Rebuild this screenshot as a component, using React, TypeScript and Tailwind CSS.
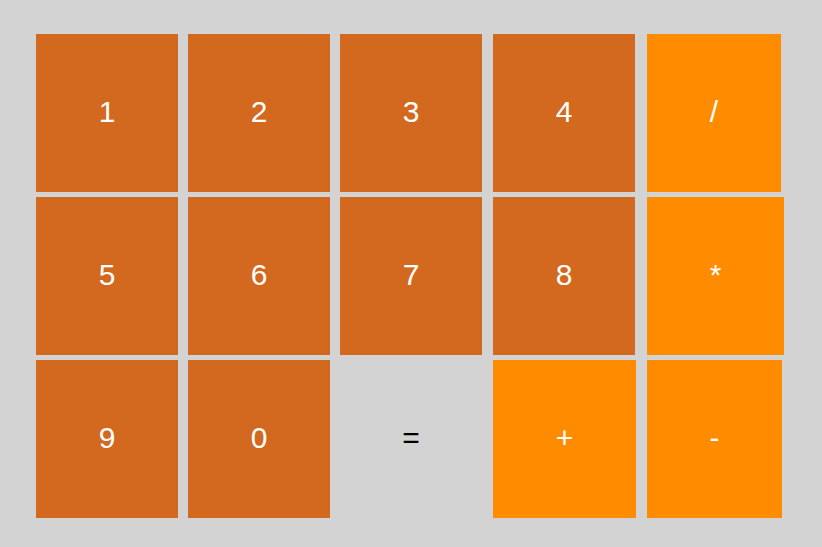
const rows: { label: string; kind: "num" | "op" | "eq"; w: string; ml: string }[][] = [
  [
    { label: "1", kind: "num", w: "w-[142px]", ml: "ml-0" },
    { label: "2", kind: "num", w: "w-[142px]", ml: "ml-[10px]" },
    { label: "3", kind: "num", w: "w-[142px]", ml: "ml-[10px]" },
    { label: "4", kind: "num", w: "w-[142px]", ml: "ml-[11px]" },
    { label: "/", kind: "op", w: "w-[134px]", ml: "ml-[12px]" },
  ],
  [
    { label: "5", kind: "num", w: "w-[142px]", ml: "ml-0" },
    { label: "6", kind: "num", w: "w-[142px]", ml: "ml-[10px]" },
    { label: "7", kind: "num", w: "w-[142px]", ml: "ml-[10px]" },
    { label: "8", kind: "num", w: "w-[142px]", ml: "ml-[11px]" },
    { label: "*", kind: "op", w: "w-[137px]", ml: "ml-[12px]" },
  ],
  [
    { label: "9", kind: "num", w: "w-[142px]", ml: "ml-0" },
    { label: "0", kind: "num", w: "w-[142px]", ml: "ml-[10px]" },
    { label: "=", kind: "eq", w: "w-[142px]", ml: "ml-[10px]" },
    { label: "+", kind: "op", w: "w-[143px]", ml: "ml-[11px]" },
    { label: "-", kind: "op", w: "w-[135px]", ml: "ml-[11px]" },
  ],
];

function Key({ label, kind, w, ml }: { label: string; kind: "num" | "op" | "eq"; w: string; ml: string }) {
  const color =
    kind === "num" ? "bg-[#d2691e] text-white" : kind === "op" ? "bg-[#ff8c00] text-white" : "bg-transparent text-black";
  return (
    <div className={`${w} ${ml} h-[158px] flex items-center justify-center pb-[4px] text-[30px] ${color}`}>
      {label}
    </div>
  );
}

export default function App() {
  return (
    <div
      className="w-[822px] h-[547px] bg-[#d3d3d3] pt-[34px] pl-[36px] flex flex-col gap-[5px]"
      style={{ fontFamily: '"Liberation Sans", Arial, sans-serif' }}
    >
      {rows.map((row, i) => (
        <div key={i} className="flex">
          {row.map((k) => (
            <Key key={k.label} {...k} />
          ))}
        </div>
      ))}
    </div>
  );
}
